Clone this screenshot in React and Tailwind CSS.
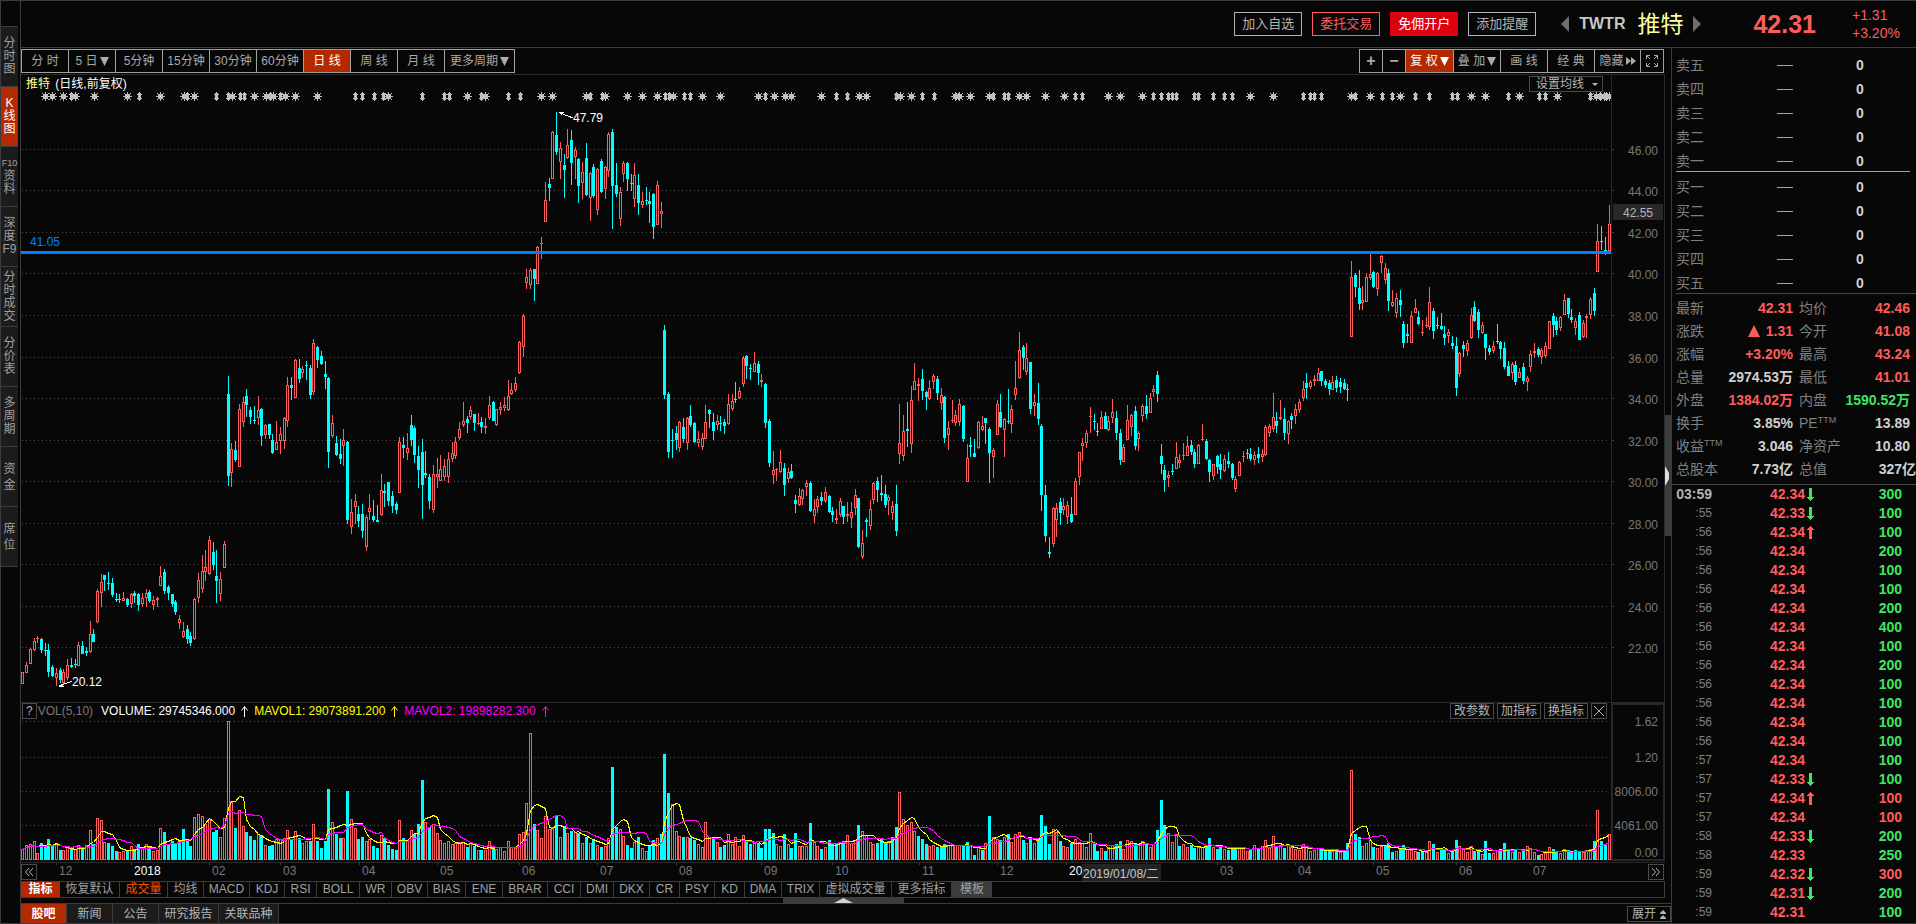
import { useState } from 'react'

const RED = '#ff5c5c'
const CYAN = '#00ffff'
const BG = '#070707'

const sideTabs = ['分时图', 'K线图', 'F10,资,料', '深,度,F9', '分时成交', '分价表', '多周期', '资金', '席位']

const periods = ['分 时', '5 日▼', '5分钟', '15分钟', '30分钟', '60分钟', '日 线', '周 线', '月 线']

const indicators = [
  ['恢复默认', 60], ['成交量', 48], ['均线', 36], ['MACD', 46], ['KDJ', 35], ['RSI', 32], ['BOLL', 43], ['WR', 32],
  ['OBV', 36], ['BIAS', 38], ['ENE', 37], ['BRAR', 45], ['CCI', 33], ['DMI', 33], ['DKX', 36], ['CR', 30],
  ['PSY', 35], ['KD', 30], ['DMA', 37], ['TRIX', 38], ['虚拟成交量', 72], ['更多指标', 60],
]

const newsTabs = ['股吧', '新闻', '公告', '研究报告', '关联品种']

const asks = ['卖五', '卖四', '卖三', '卖二', '卖一']
const bids = ['买一', '买二', '买三', '买四', '买五']

const stats = [
  ['最新', '', '42.31', 'r', '均价', '', '42.46', 'r'],
  ['涨跌', '', '1.31', 'r', '今开', '', '41.08', 'r'],
  ['涨幅', '', '+3.20%', 'r', '最高', '', '43.24', 'r'],
  ['总量', '', '2974.53万', 'w', '最低', '', '41.01', 'r'],
  ['外盘', '', '1384.02万', 'r', '内盘', '', '1590.52万', 'g'],
  ['换手', '', '3.85%', 'w', 'PE', 'TTM', '13.89', 'w'],
  ['收益', 'TTM', '3.046', 'w', '净资产', '', '10.80', 'w'],
  ['总股本', '', '7.73亿', 'w', '总值', '', '327亿', 'w'],
]

// time, price, tick direction, size, size colour
const trades = [
  ['03:59', '42.34', 'down', 300, 'g'],
  [':55', '42.33', 'down', 100, 'g'],
  [':56', '42.34', 'up', 100, 'g'],
  [':56', '42.34', '', 200, 'g'],
  [':56', '42.34', '', 100, 'g'],
  [':56', '42.34', '', 100, 'g'],
  [':56', '42.34', '', 200, 'g'],
  [':56', '42.34', '', 400, 'g'],
  [':56', '42.34', '', 100, 'g'],
  [':56', '42.34', '', 200, 'g'],
  [':56', '42.34', '', 100, 'g'],
  [':56', '42.34', '', 100, 'g'],
  [':56', '42.34', '', 100, 'g'],
  [':56', '42.34', '', 100, 'g'],
  [':57', '42.34', '', 100, 'g'],
  [':57', '42.33', 'down', 100, 'g'],
  [':57', '42.34', 'up', 100, 'r'],
  [':57', '42.34', '', 100, 'r'],
  [':58', '42.33', 'down', 200, 'g'],
  [':58', '42.33', '', 250, 'g'],
  [':59', '42.32', 'down', 300, 'r'],
  [':59', '42.31', 'down', 200, 'g'],
  [':59', '42.31', '', 100, 'g'],
]

const textColor = { r: 'text-[#ff5c5c]', g: 'text-[#3ce664]', w: 'text-[#d0d0d0]' }

// Candle history in four blocks, each with its own x scale and origin.
// Entry: direction + x, high, body top, body bottom, low, volume level
const blocks = [
  {
    k: 2.8, x0: 0, y0: 330,
    bars: `u63,1026,1026,1061,1061,477 u74,996,1005,1028,1030,466 u85,954,958,1001,1001,463 u96,923,933,960,963,454
u105,917,925,927,938,490 d116,924,927,960,969,459 d127,938,960,962,977,468 d136,941,960,1026,1041,447
d147,1005,1011,1038,1041,466 u158,1014,1029,1043,1068,462 d169,1014,1020,1050,1059,480 u178,1017,1026,1059,1062,480
u189,987,1005,1044,1050,470 d200,984,1005,1011,1014,478 d211,987,1001,1004,1014,478 u220,935,945,1007,1007,466
d231,933,948,972,972,473 d242,950,962,968,977,466 u253,873,912,966,970,421 d262,897,912,936,936,463
u273,777,783,876,879,385 u284,731,756,788,831,390 d292,735,735,750,783,457 d304,726,759,762,780,459
d315,744,759,795,801,468 d326,789,807,809,816,483 d335,792,807,809,819,486 u346,786,804,812,812,484
d357,804,807,825,831,483 u368,788,792,822,834,468 d377,783,789,799,819,478 d388,789,792,825,843,462
u399,789,804,822,831,470 u410,777,789,803,831,463 d418,781,786,813,819,470 u430,798,810,826,840,484
u441,800,804,809,831,480 u449,708,738,767,767,414 d460,717,726,783,792,426 d472,765,771,789,810,464
d483,792,792,822,831,454 d492,810,816,846,855,460 u502,855,867,878,897,451 u513,876,902,920,924,417
d525,885,897,927,942,450 d533,906,918,938,948,468 u545,804,807,926,930,381 u556,729,750,803,819,372
u567,675,723,776,789,377 u575,660,711,725,753,403 u586,618,630,731,735,388 d598,636,666,705,720,425
d606,660,738,753,819,421 u617,726,747,791,813,441 u628,633,642,713,713,385 d640,138,192,438,468,94
u648,339,357,429,471,333 d659,333,360,390,396,414 u670,222,237,410,410,361 u682,201,216,276,291,408
d690,177,198,225,261,426 d701,231,240,261,282,438 d713,228,269,273,282,451 u724,198,240,263,285,433
d732,234,237,318,348,436 u743,282,285,314,327,466 d754,282,282,315,326,468 d763,312,330,369,372,465
u774,273,336,359,360,446 u785,291,312,332,372,446 u797,261,264,332,357,444 u805,141,165,272,291,421
d816,141,165,174,210,450 u828,88,90,203,204,423 d838,87,114,147,159,444 u847,108,117,129,144,460
d858,93,105,108,150,454 d869,105,114,195,207,453 u878,27,39,186,195,403 d889,48,51,90,114,453
d900,63,78,102,105,474 d911,93,132,141,177,453 d920,141,144,366,414,297 u931,255,279,318,324,397
d942,318,339,375,378,431 d953,327,372,387,402,444 u962,297,330,347,408,444 d973,333,336,570,582,303
u984,507,546,590,612,388 u996,492,513,530,582,415 d1004,528,552,573,591,447 d1015,522,552,603,624,441
u1027,555,561,650,663,453 u1035,492,534,545,570,446 d1046,510,558,570,576,468 d1057,525,570,576,576,473
u1068,432,480,555,558,435 d1077,462,483,489,531,444 d1088,456,456,513,528,465 d1099,483,498,528,549,477
d1110,516,522,540,552,480 u1118,321,336,488,489,391 d1130,321,345,354,384,444 u1141,309,354,368,390,452
d1153,255,285,330,348,421 d1161,288,294,375,399,432 d1172,348,378,420,474,403 d1183,327,366,465,567,270
d1191,363,429,435,444,397 d1203,432,441,513,537,411 u1214,405,432,540,549,403 u1225,384,432,440,474,429
u1233,375,417,452,454,451 u1244,387,408,440,453,459 u1256,366,387,440,459,453 u1267,336,369,387,396,462
u1275,321,336,378,387,459 u1287,276,297,324,330,457 u1298,216,273,285,291,457 d1309,258,267,279,309,471
u1318,228,240,261,267,460 d1329,252,252,279,303,468 u1340,249,279,281,285,480 d1348,261,276,291,309,480
u1359,264,289,293,312,481 u1370,198,225,264,270,453 d1382,213,216,273,273,471 u1390,237,237,285,288,476
u1401,216,231,239,255,471 u1412,201,225,233,243,484 u1424,150,198,240,243,453 u1432,159,180,192,195,472
u1443,141,159,180,186,474 u1454,33,37,130,132,433`,
  },
  {
    k: 2.8, x0: 500, y0: 80,
    bars: `u66,702,708,800,831,427 u74,567,591,608,627,340 u85,564,570,614,627,130 d96,567,567,597,663,403
u105,498,501,611,612,421 u116,471,489,492,537,444 u127,306,360,425,426,379 d138,294,312,324,363,418
u147,153,156,296,297,411 d158,96,165,216,225,374 u169,186,204,245,297,441 d180,222,255,270,354,408
u189,147,195,234,237,429 d200,150,180,249,315,424 u211,201,210,230,297,427 d220,234,237,318,369,429
u231,246,276,308,357,459 d242,189,234,345,348,441 u253,276,279,353,423,460 d262,252,261,348,354,448
u273,264,267,389,405,466 d284,237,243,336,339,471 u295,258,261,326,357,468 u304,156,162,272,291,445
d315,147,156,318,447,231 d326,249,315,342,351,411 u337,321,336,416,438,418 u346,243,249,281,306,439
d357,246,249,297,333,465 d368,282,309,312,333,473 u376,249,285,356,381,457 d388,282,315,369,405,442
u399,336,363,374,384,475 d410,321,360,363,375,483 d418,336,363,372,429,467 d430,339,342,441,477,450
u441,303,315,434,435,445 u452,366,393,401,444,432 d460,735,750,945,957,192 d472,936,942,1116,1134,309
d483,1047,1079,1082,1134,343 d494,1038,1059,1080,1110,423 u503,1023,1026,1103,1116,439 d514,1014,1041,1077,1089,441
u525,1011,1014,1088,1110,441 d533,975,1008,1035,1041,443 d545,1026,1029,1086,1089,450 u556,1053,1077,1088,1101,463
u567,1060,1074,1100,1110,470 u576,975,1026,1076,1077,397 d587,987,990,1002,1044,441 d598,999,1026,1053,1080,441
u609,1005,1023,1034,1050,457 d617,1008,1029,1032,1053,471 d628,1017,1026,1038,1062,465 u640,942,972,1032,1035,433
u651,942,963,987,993,462 d659,906,957,960,969,442 u670,921,933,954,957,468 u682,828,834,911,921,435
d690,825,828,858,897,450 d701,852,864,867,900,462 u713,816,849,875,876,459 d724,843,852,879,915,459
u732,882,901,905,921,474 d743,909,912,1029,1044,417 d754,1017,1023,1149,1161,417 u766,1113,1170,1184,1212,429
u774,1163,1167,1171,1203,462 u785,1110,1146,1175,1179,468 d797,1149,1164,1215,1248,432 u808,1164,1176,1196,1209,462
d816,1152,1173,1194,1197,474 d828,1245,1260,1272,1299,429 u838,1224,1248,1275,1278,468 u847,1227,1230,1256,1275,468
u858,1200,1209,1220,1248,468 d869,1203,1209,1293,1296,399 u880,1257,1287,1307,1329,457 u889,1248,1257,1280,1299,468
d900,1236,1251,1263,1275,477 u911,1221,1236,1262,1269,471 d922,1245,1248,1296,1299,450 d931,1281,1293,1305,1326,460
u942,1287,1314,1319,1332,463 u953,1254,1263,1304,1311,459 d962,1278,1278,1311,1332,453 u973,1266,1302,1307,1326,435
u984,1266,1296,1313,1344,459 u996,1227,1245,1284,1305,450 d1004,1254,1254,1401,1404,405 u1015,1350,1389,1430,1437,424
d1026,1314,1320,1326,1371,436 u1037,1260,1287,1337,1350,457 u1046,1206,1209,1260,1272,462 d1057,1191,1203,1230,1266,459
d1068,1185,1239,1245,1263,447 d1079,1215,1242,1275,1284,459 u1088,1245,1251,1263,1305,453 u1099,1263,1278,1298,1320,441
d1110,1215,1272,1353,1368,411 u1118,972,1089,1121,1152,307 u1130,1005,1053,1127,1143,388 d1141,966,1047,1053,1101,406
u1153,918,960,1091,1119,397 u1161,849,903,929,930,424 u1172,894,912,918,963,438 d1183,867,897,933,960,447
d1194,933,936,951,990,462 u1203,900,924,957,960,468 u1214,882,888,906,927,465 d1225,888,897,939,960,471
u1236,924,945,968,990,468 d1244,948,951,1074,1089,462 u1256,1023,1044,1064,1110,465 u1267,960,1020,1023,1029,462
u1275,990,1005,1028,1038,465 u1286,957,972,1025,1038,465 d1298,975,978,1077,1086,468 u1309,1092,1134,1205,1206,456
d1317,1071,1095,1101,1131,465 d1328,1077,1119,1131,1131,495 u1340,1023,1026,1103,1107,468 u1351,1008,1038,1050,1053,480
d1359,1014,1014,1029,1092,460 d1370,1041,1047,1119,1209,378 u1382,1104,1110,1130,1194,442 u1393,960,972,1064,1065,447
d1401,942,996,1041,1044,450 u1412,1014,1017,1049,1131,441 d1424,927,1023,1026,1032,432 u1432,975,987,1031,1059,457
u1443,843,924,944,960,433 u1454,756,810,893,897,427 d1466,795,801,834,870,450 u1474,789,834,875,885,459
d1485,846,846,987,1002,441 u1497,942,966,977,1008,460 d1508,909,969,1017,1035,447 d1516,1032,1038,1245,1293,375
d1527,1215,1245,1368,1386,408 d1538,1371,1416,1422,1434,462 u1550,1281,1284,1391,1401,418 u1558,1270,1284,1319,1371,426`,
  },
  {
    k: 2.3757, x0: 1000, y0: 300,
    bars: `d143,594,606,639,675,453 u152,594,618,629,645,468 u160,603,615,650,672,471 d169,591,642,666,669,459
u180,534,543,644,645,447 u188,455,457,530,555,457 u196,414,430,437,483,460 u205,390,399,430,444,471
u215,321,348,350,399,430 d224,342,363,366,390,462 d232,369,393,396,408,483 u241,333,351,386,387,475
d250,336,348,387,387,483 u258,348,363,390,393,470 u267,297,336,353,369,466 d277,333,354,399,420,462
d286,387,399,480,495,453 u294,432,441,485,486,478 u303,315,360,419,420,451 u312,342,345,380,408,454
d322,318,333,438,450,462 u329,393,399,416,453,466 u338,312,318,349,366,454 d348,285,318,342,357,459
u357,279,294,338,339,471 u365,255,267,276,291,463 d374,213,225,282,306,420 d383,432,468,492,522,330
d391,495,510,540,576,405 u400,513,524,534,561,430 d410,492,513,516,525,457 u419,426,471,506,507,435
u427,462,480,489,504,468 u436,429,465,467,480,463 u445,408,438,467,468,472 d455,420,435,456,465,465
d462,447,456,492,504,474 u472,432,435,491,492,471 u481,372,417,419,423,472 d491,417,423,477,480,465
d498,477,480,516,546,444 u507,492,492,527,540,471 d517,465,468,501,522,477 d523,462,492,510,537,471
u533,465,477,512,516,476 d543,456,483,492,504,480 d552,489,492,534,540,471 u559,528,537,566,576,475
u569,483,486,527,528,472 u578,453,468,471,486,475 d588,447,459,462,477,484 d595,444,462,477,483,477
u604,453,465,479,495,466 d614,441,462,474,489,474 u623,447,462,470,486,469 u631,375,381,464,468,451
u640,372,378,398,411,475 u649,279,351,386,396,439 d657,336,363,378,399,471 u666,300,351,357,360,466
d676,324,357,399,420,474 u685,360,363,401,432,462 d692,339,348,360,387,472 u702,312,327,347,372,477
u711,297,306,329,339,480 u721,243,267,293,303,463 d728,219,249,264,297,472 u737,240,246,262,267,484
u747,225,237,244,258,480 u757,204,219,242,243,475 d763,213,213,243,258,477 d773,237,243,255,264,483
d783,240,249,267,285,480 u790,228,246,269,270,483 d799,228,240,264,276,480 d809,234,246,261,279,487
d818,237,249,267,270,483 d825,252,266,270,303,459`,
  },
  {
    k: 3, x0: 1330, y0: 190,
    bars: `u64,213,261,440,441,240 d76,249,255,291,321,432 d88,240,294,342,360,441 u97,288,330,338,360,469
u109,249,261,335,336,459 u121,189,252,263,270,450 d130,243,246,291,294,471 u142,246,249,296,318,475
u154,195,198,218,249,469 u166,219,234,269,282,466 d175,237,249,333,363,459 u187,300,336,347,351,486
u199,309,324,368,384,484 d211,300,330,345,381,474 d220,393,402,459,474,465 d232,402,432,438,459,478
u244,363,378,458,459,481 u256,327,354,368,369,483 d265,363,381,402,405,486 u277,390,426,428,438,486
u289,381,405,408,414,487 u298,291,336,410,420,454 d310,354,363,423,447,462 d322,381,405,408,417,486
d334,369,408,417,420,480 d343,408,432,444,465,477 u355,417,426,437,459,489 d367,438,459,468,477,483
d379,441,468,594,618,450 u388,486,489,551,561,469 d400,453,465,477,501,477 u412,450,459,482,498,487
u424,354,375,443,447,469 d433,333,351,393,396,483 d445,357,366,420,444,480 u457,396,405,428,432,492
d466,432,432,474,510,453 d478,465,474,486,495,489 u490,453,468,482,489,489 d502,402,453,456,462,480
d511,453,456,477,507,480 d523,456,474,531,537,459 d535,513,528,558,558,478 u547,516,522,548,570,487
d556,513,525,576,585,478 u568,534,546,563,564,487 d580,519,531,573,582,477 u592,558,564,575,603,469
u601,480,492,530,546,474 u613,459,483,488,504,486 d625,471,477,495,501,495 u634,474,480,500,522,492
u646,456,468,497,504,489 u658,393,393,476,477,472 d670,369,378,405,441,477 d679,381,393,420,435,486
u691,378,381,413,423,489 u703,312,330,374,375,478 d715,324,324,372,384,480 d724,357,381,390,399,489
u736,384,393,413,435,480 d748,366,375,450,450,483 u760,390,399,440,444,486 u769,372,378,383,444,480
u781,321,327,374,387,478 d793,294,309,363,378,453 u802,102,153,245,246,361 d814,108,153,156,180,453
d826,141,180,186,195,466 u838,45,102,182,183,433`,
  },
]

const candles = blocks.flatMap(({ k, x0, y0, bars }) =>
  bars.split(/\s+/).map((s) => {
    const up = s[0] === 'u'
    const [x, hi, top, bot, lo, vol] = s.slice(1).split(',').map(Number)
    const y = (v) => Math.round(v / 3) + y0
    return { up, x: Math.floor(x0 + x / k), hi: y(hi), top: y(top), bot: y(bot), lo: y(lo), vol: Math.round((510 - vol) / 3) }
  })
)

const close = (c) => (c.up ? c.top : c.bot)

const average = (n) =>
  candles
    .map((c, i) => {
      const win = candles.slice(Math.max(0, i - n + 1), i + 1)
      const avg = win.reduce((sum, w) => sum + w.vol, 0) / win.length
      return `${c.x + 0.5},${Math.round(860 - avg) + 0.5}`
    })
    .join(' ')

// Event markers above the candles: s = star, n = narrow
const marks = `s45 s52 s63 n71 s75 s94 s127 n139 s160 s184 n187 s194 n216 n228 s232 n240 n244 s254 s266 n270 s273 n280
s285 s295 s317 n355 n362 n374 n383 s388 n422 n444 n449 s467 n481 s485 n508 n520 s541 s552 s586 n590 n602 s605 s627
s642 s657 n665 n669 s673 n684 n690 s702 s720 s758 n765 s774 s785 s791 s821 n836 n847 s859 s866 n896 s900 s911 n922
n934 s955 s959 s970 s989 n993 n1004 n1008 s1019 s1026 s1045 s1064 n1075 n1082 s1108 s1120 s1142 n1153 n1161 n1168
n1172 n1176 n1194 n1198 n1213 n1224 n1232 s1250 s1273 n1303 n1310 n1314 n1321 s1351 n1355 s1370 n1382 n1392 s1400
n1415 n1429 n1452 n1457 s1471 s1485 n1508 s1519 n1539 n1545 s1557 n1590 s1596 n1600 s1604 n1606 s1609`.split(/\s+/)

const priceGrid = [
  ['46.00', 149], ['44.00', 190], ['42.00', 232], ['40.00', 273], ['38.00', 315], ['36.00', 357], ['34.00', 398],
  ['32.00', 440], ['30.00', 481], ['28.00', 523], ['26.00', 564], ['24.00', 606], ['22.00', 647],
]

const volumeGrid = [['1.62', 721], ['1.20', 757], ['8006.00', 791], ['4061.00', 825]]

// The cursor date covers the end of 2019 and the next month
const months = [
  ['12', 56], ['2018', 131], ['02', 209], ['03', 280], ['04', 359], ['05', 437], ['06', 519], ['07', 597], ['08', 676],
  ['09', 761], ['10', 832], ['11', 919], ['12', 997], ['20', 1066], ['', 1146], ['03', 1217], ['04', 1295],
  ['05', 1373], ['06', 1456], ['07', 1530],
]

function Bar({ x, top, bot, hollow }) {
  const h = Math.max(1, bot - top)
  return (
    <>
      <rect x={x - 1} y={top} width="3" height={h} fill={hollow ? RED : CYAN} />
      {hollow && h > 2 && <rect x={x} y={top + 1} width="1" height={h - 2} fill={BG} />}
    </>
  )
}

function GridLines({ rows }) {
  return rows.map(([label, y]) => (
    <line key={label} x1="22" x2="1608" y1={y + 0.5} y2={y + 0.5} stroke="#505050" strokeDasharray="1 3" />
  ))
}

function PriceChart() {
  return (
    <svg className="block h-[627px] w-full" viewBox="21 75 1590 627" preserveAspectRatio="none" shapeRendering="crispEdges">
      <GridLines rows={priceGrid} />
      {marks.map((m) => {
        const x = Number(m.slice(1))
        return m[0] === 's' ? (
          <path key={m} d={`M${x - 2} 94h5v5h-5zM${x} 92h1v9h-1zM${x - 4} 96h9v1h-9zM${x - 3} 93h1v1h-1zM${x + 3} 93h1v1h-1zM${x - 3} 99h1v1h-1zM${x + 3} 99h1v1h-1z`} fill="#c0c0c0" />
        ) : (
          <path key={m} d={`M${x} 92h1v9h-1zM${x - 1} 93h3v7h-3zM${x - 2} 94h5v1h-5zM${x - 2} 98h5v1h-5z`} fill="#c0c0c0" />
        )
      })}
      {candles.map((c) => (
        <g key={c.x}>
          <rect x={c.x} y={c.hi} width="1" height={Math.max(1, c.lo - c.hi)} fill={c.up ? RED : CYAN} />
          <Bar x={c.x} top={c.top} bot={c.bot} hollow={c.up} />
        </g>
      ))}
      <rect x="21" y="251" width="1590" height="3" fill="#0080ff" />
      <g stroke="#fff" fill="#fff">
        <path d="M559 112.500L573 118" fill="none" />
        <path d="M558 112h6l-3 3z" stroke="none" />
        <path d="M59 685.500L72 681.500" fill="none" />
        <path d="M58 687h6l-2 -4z" stroke="none" />
      </g>
      <g fill="#fff" fontFamily="Liberation Sans, sans-serif" fontSize="12">
        <text x="573" y="122">47.79</text>
        <text x="72" y="686">20.12</text>
        <text x="30" y="246" fill="#0080ff">41.05</text>
      </g>
    </svg>
  )
}

function VolumeChart() {
  return (
    <svg className="block h-[159px] w-full" viewBox="21 703 1590 159" preserveAspectRatio="none" shapeRendering="crispEdges">
      <GridLines rows={volumeGrid} />
      {candles.map((c, i) => (
        <Bar key={c.x} x={c.x} top={860 - c.vol} bot={860} hollow={i === 0 || close(c) <= close(candles[i - 1])} />
      ))}
      <polyline points={average(5)} fill="none" stroke="#ffff00" />
      <polyline points={average(10)} fill="none" stroke="#ff00ff" />
    </svg>
  )
}

function SmallButton({ children }) {
  return (
    <button className="flex h-4 items-center justify-center border border-[#4a4a4a] px-[3px] text-xs leading-none text-[#b4b4b4]">
      {children}
    </button>
  )
}

function UpArrow({ className }) {
  return (
    <svg className={className} width="7" height="11" viewBox="0 0 7 11" fill="none" stroke="currentColor">
      <path d="M3.500 11V1M0.500 4.500L3.500 0.500L6.500 4.500" />
    </svg>
  )
}

function Caret() {
  return <svg className="ml-0.5 inline" width="9" height="9" viewBox="0 0 9 9" fill="currentColor"><path d="M0 0H9L4.500 9z" /></svg>
}

function Tick({ dir }) {
  if (!dir) return null
  return (
    <svg width="7" height="13" viewBox="0 0 7 13" fill={dir === 'up' ? RED : '#3ce664'} shapeRendering="crispEdges">
      <path d={dir === 'up' ? 'M3 0H4L7 4H5V13H2V4H0z' : 'M3 13H4L7 9H5V0H2V9H0z'} />
    </svg>
  )
}

function Header() {
  return (
    <header className="flex h-12 items-center justify-end border-y border-[#3c3c3c]">
      <div className="flex gap-2.5 text-[13px]">
        <button className="h-6 w-[68px] border border-[#b4b4b4] text-[#b4b4b4]">加入自选</button>
        <button className="h-6 w-[68px] border border-[#ff5c5c] text-[#ff5c5c]">委托交易</button>
        <button className="h-6 w-[68px] bg-[#dc0011] text-white">免佣开户</button>
        <button className="h-6 w-[68px] border border-[#b4b4b4] text-[#b4b4b4]">添加提醒</button>
      </div>
      <button className="ml-[25px]" aria-label="上一只">
        <svg width="8" height="16" viewBox="0 0 8 16" fill="#6e6e6e"><path d="M8 0V16L0 8z" /></svg>
      </button>
      <span className="ml-2.5 text-base font-bold text-[#c8c8c8]">TWTR</span>
      <span className="ml-3 text-[23px] leading-none text-[#ffffa0]">推特</span>
      <button className="ml-2.5" aria-label="下一只">
        <svg width="8" height="16" viewBox="0 0 8 16" fill="#6e6e6e"><path d="M0 0V16L8 8z" /></svg>
      </button>
      <strong className="ml-[52px] text-[25px] leading-none text-[#ff5c5c]">42.31</strong>
      <div className="ml-9 w-16 text-sm leading-[18px] text-[#ff5c5c]">
        <div>+1.31</div>
        <div>+3.20%</div>
      </div>
    </header>
  )
}

function Toolbar({ period, setPeriod }) {
  const tool = 'h-full border-r border-[#a0a0a0]'
  return (
    <div className="mt-px flex h-6 justify-between pr-px text-xs text-[#aaaaaa]">
      <div className="flex border border-r-0 border-[#a0a0a0]">
        {periods.map((p) => (
          <button
            key={p}
            onClick={() => setPeriod(p)}
            className={`h-full w-[47px] border-r border-[#a0a0a0] whitespace-pre ${p === period ? 'bg-[#b42a00] text-white' : ''}`}
          >
            {p.replace('▼', '')}
            {p.endsWith('▼') && <Caret />}
          </button>
        ))}
        <button className="h-full w-[70px] border-r border-[#a0a0a0]">更多周期<Caret /></button>
      </div>
      <div className="flex border border-r-0 border-[#a0a0a0]">
        <button className={`${tool} w-[23px] text-base leading-none font-bold`}>+</button>
        <button className={`${tool} w-[23px] text-base leading-none font-bold`}>−</button>
        <button className={`${tool} w-12 bg-[#b42a00] text-white`}>复 权<Caret /></button>
        <button className={`${tool} w-[47px]`}>叠 加<Caret /></button>
        <button className={`${tool} w-[47px]`}>画 线</button>
        <button className={`${tool} w-[47px]`}>经 典</button>
        <button className={`${tool} flex w-[46px] items-center justify-center`}>
          隐藏
          <svg className="ml-0.5" width="10" height="8" viewBox="0 0 10 8" fill="currentColor"><path d="M0 0L5 4L0 8zM5 0L10 4L5 8z" /></svg>
        </button>
        <button className={`${tool} flex w-[23px] items-center justify-center`} aria-label="全屏">
          <svg width="12" height="12" viewBox="0 0 12 12" fill="none" stroke="currentColor">
            <path d="M0.500 4V0.500H4M8 0.500H11.500V4M11.500 8V11.500H8M4 11.500H0.500V8M1 1L4 4M11 1L8 4M11 11L8 8M1 11L4 8" />
          </svg>
        </button>
      </div>
    </div>
  )
}

function BookRows({ rows }) {
  return rows.map((name) => (
    <tr key={name} className="h-6">
      <th scope="row" className="w-[101px] text-left font-normal text-[#808080]">{name}</th>
      <td><div className="h-px w-4 bg-[#3ce664]" aria-label="—" /></td>
      <td className="w-[60px] text-left font-bold text-[#d0d0d0]">0</td>
    </tr>
  ))
}

function QuotePanel() {
  return (
    <aside className="w-[245px] shrink-0 overflow-hidden border-l border-[#3c3c3c] text-sm leading-none">
      <div className="pt-[5px] pl-1">
        <table className="w-full"><tbody><BookRows rows={asks} /></tbody></table>
        <div className="-mt-0.5 mr-1.5 h-px bg-[#a0a0a0]" />
        <table className="mt-[3px] w-full"><tbody><BookRows rows={bids} /></tbody></table>
      </div>
      <div className="-mt-0.5 ml-1 border-t border-[#464646] pt-0.5">
        <table className="w-full table-fixed">
          <tbody>
            {stats.map(([a, aSup, av, ac, b, bSup, bv, bc]) => (
              <tr key={a} className="h-[23px] whitespace-nowrap">
                <th scope="row" className="w-[52px] text-left font-normal text-[#808080]">
                  <span className="flex">{a}{aSup && <sup className="top-0 text-[9px] leading-none">{aSup}</sup>}</span>
                </th>
                <td className={`w-[65px] text-right font-bold ${textColor[ac]}`}>
                  <div className="flex items-center justify-end gap-1.5">
                    {a === '涨跌' && <svg width="12" height="12" viewBox="0 0 12 12" fill={RED}><path d="M6 0L12 12H0z" /></svg>}
                    {av}
                  </div>
                </td>
                <th scope="row" className="w-[56px] pl-1.5 text-left font-normal text-[#808080]">
                  <span className="flex">{b}{bSup && <sup className="top-0 text-[9px] leading-none">{bSup}</sup>}</span>
                </th>
                <td className={`text-right font-bold ${b === '总值' ? 'pr-0' : 'pr-1.5'} ${textColor[bc]}`}>
                  <div className="flex justify-end">{bv}</div>
                </td>
              </tr>
            ))}
          </tbody>
        </table>
      </div>
      <table className="mt-1 w-full border-t border-[#464646]">
        <tbody>
          {trades.map(([time, price, dir, size, color], i) => (
            <tr key={i} className="h-[19px]">
              <td className={`w-10 text-right ${i === 0 ? 'font-bold text-[#b4b4b4]' : 'text-xs leading-none text-[#808080]'}`}>{time}</td>
              <td className="w-[93px] text-right font-bold text-[#ff5c5c]">{price}</td>
              <td className="pl-0.5"><Tick dir={dir} /></td>
              <td className={`pr-3.5 text-right font-bold ${textColor[color]}`}>{size}</td>
            </tr>
          ))}
        </tbody>
      </table>
    </aside>
  )
}

export default function App() {
  const [period, setPeriod] = useState('日 线')
  const [side, setSide] = useState('K线图')
  const [news, setNews] = useState('股吧')

  return (
    <div className="flex min-h-screen border-b border-[#3c3c3c] bg-[#070707] font-['Liberation_Sans','Noto_Sans_CJK_SC',sans-serif]">
      {/* Left view switcher */}
      <nav className="flex w-[21px] shrink-0 flex-col border-t border-r border-l border-[#3c3c3c] pt-[25px] pr-px">
        {sideTabs.map((tab) => {
          const lines = tab.includes(',') ? tab.split(',') : [...tab]
          return (
            <button
              key={tab}
              onClick={() => setSide(tab)}
              className={`flex h-[60px] w-[17px] flex-col items-center justify-center border-t border-[#3c3c3c] text-xs ${
                lines.length === 2 ? 'leading-4' : 'leading-[13px]'
              } ${tab === side ? 'bg-[#b42a00] text-white' : 'bg-[#1c1c1c] text-[#a0a0a0]'}`}
            >
              {lines.map((ch, i) => (
                <span key={i} className={ch === 'F10' ? 'text-[9px] leading-[13px]' : ''}>{ch}</span>
              ))}
            </button>
          )
        })}
        <div className="w-[17px] border-t border-[#3c3c3c]" />
      </nav>

      <div className="flex min-w-0 flex-1 flex-col">
        <Header />
        <div className="flex flex-1">
          <div className="flex min-w-0 flex-1 flex-col">
            <div className="flex flex-1">
              <main className="flex min-w-0 flex-1 flex-col">
                <Toolbar period={period} setPeriod={setPeriod} />

                {/* Price */}
                <div className="mt-px flex border-t border-[#282828]">
                  <div className="relative min-w-0 flex-1">
                    <PriceChart />
                    <div className="absolute top-0 right-0 left-0 flex items-start justify-between pr-2 pl-[5px] text-xs">
                      <h1 className="pt-px text-[#ffff9a]">推特 <span className="ml-0.5 text-white">(日线,前复权)</span></h1>
                      <button className="mt-px flex h-4 items-center border border-[#4a4a4a] pr-1 pl-1.5 text-xs leading-none text-[#b4b4b4]">
                        设置均线
                        <svg className="ml-2" width="6" height="3" viewBox="0 0 6 3" fill="currentColor"><path d="M0 0H6L3 3z" /></svg>
                      </button>
                    </div>
                  </div>
                  <svg className="h-[627px] w-[54px] shrink-0 border-r border-l border-[#282828]" viewBox="1612 75 52 627">
                    <g fontFamily="Liberation Sans, sans-serif" fontSize="12" fill="#787878" textAnchor="end">
                      {priceGrid.map(([label, y]) => (
                        <g key={label}>
                          <rect x="1612" y={y} width="2" height="1" fill="#3c3c3c" />
                          <text x="1658" y={y + 6}>{label}</text>
                        </g>
                      ))}
                      <rect x="1613" y="204" width="50" height="16" fill="#282828" />
                      <text x="1653" y="217" fill="#b4b4b4">42.55</text>
                    </g>
                  </svg>
                </div>

                {/* Volume */}
                <div className="flex border-t border-[#282828]">
                  <div className="relative min-w-0 flex-1">
                    <VolumeChart />
                    <div className="absolute top-0 right-0 left-0 flex items-center justify-between pr-1 pl-px text-xs whitespace-nowrap">
                      <div className="flex items-center">
                        <SmallButton>?</SmallButton>
                        <span className="ml-px text-[#787878]">VOL(5,10)</span>
                        <span className="ml-2 text-white">VOLUME: 29745346.000</span>
                        <UpArrow className="ml-1.5 text-white" />
                        <span className="ml-1.5 text-[#ffff00]">MAVOL1: 29073891.200</span>
                        <UpArrow className="ml-1.5 text-[#ffff00]" />
                        <span className="ml-1.5 text-[#ff00ff]">MAVOL2: 19898282.300</span>
                        <UpArrow className="ml-1.5 text-[#ff00ff]" />
                      </div>
                      <div className="flex gap-[3px]">
                        <SmallButton>改参数</SmallButton>
                        <SmallButton>加指标</SmallButton>
                        <SmallButton>换指标</SmallButton>
                        <button className="flex size-4 items-center justify-center border border-[#4a4a4a] text-[#b4b4b4]" aria-label="关闭">
                          <svg width="10" height="10" viewBox="0 0 10 10" stroke="currentColor"><path d="M0 0L10 10M10 0L0 10" /></svg>
                        </button>
                      </div>
                    </div>
                  </div>
                  <svg className="h-[158px] w-[54px] shrink-0 border-2 border-[#282828]" viewBox="1613 705 50 154">
                    <g fontFamily="Liberation Sans, sans-serif" fontSize="12" fill="#787878" textAnchor="end">
                      {volumeGrid.map(([label, y]) => (
                        <text key={label} x="1658" y={y + 5}>{label}</text>
                      ))}
                      <text x="1658" y="857">0.00</text>
                    </g>
                  </svg>
                </div>

                {/* Dates */}
                <div className="flex h-[19px] items-start border-t border-[#282828] text-xs">
                  <button className="mt-px flex size-4 shrink-0 items-center justify-center border border-[#4a4a4a]" aria-label="向前">
                    <svg width="8" height="8" viewBox="0 0 8 8" fill="none" stroke="#b4b4b4"><path d="M4 0L0.500 4L4 8M8 0L4.500 4L8 8" /></svg>
                  </button>
                  <svg className="h-[18px] min-w-0 flex-1" viewBox="37 863 1611 18" preserveAspectRatio="none">
                    <g fontFamily="Liberation Sans, Noto Sans CJK SC, sans-serif" fontSize="12">
                      {months.map(([label, x]) => (
                        <g key={x}>
                          <rect x={x} y="863" width="1" height="2" fill="#3c3c3c" />
                          <text x={x + 3} y="875" fill={label.startsWith('20') ? '#fff' : '#787878'}>{label}</text>
                        </g>
                      ))}
                      <rect x="1082" y="864" width="79" height="17" fill="#232323" />
                      <text x="1083" y="878" fill="#c8c8c8">2019/01/08/二</text>
                    </g>
                  </svg>
                  <button className="mt-px mr-px flex size-4 shrink-0 items-center justify-center border border-[#4a4a4a]" aria-label="向后">
                    <svg width="8" height="8" viewBox="0 0 8 8" fill="none" stroke="#b4b4b4"><path d="M0 0L3.500 4L0 8M4 0L7.500 4L4 8" /></svg>
                  </button>
                </div>

                {/* Indicators */}
                <div className="flex h-[17px] border border-l-0 border-[#3c3c3c] text-xs leading-[15px] whitespace-nowrap text-[#a0a0a0]">
                  <button className="w-[39px] bg-[#b42a00] leading-[15px] font-bold text-white">指标</button>
                  {indicators.map(([name, width]) => (
                    <button
                      key={name}
                      style={{ width }}
                      className={`border-r border-[#3c3c3c] leading-[15px] ${name === '成交量' ? 'text-[#ff5000]' : ''}`}
                    >
                      {name}
                    </button>
                  ))}
                  <button className="w-10 bg-[#3c3c3c] leading-[15px]">模板</button>
                </div>
                <div className="flex h-[5px] justify-center">
                  <div className="flex w-[121px] justify-center bg-[#3c3c3c]">
                    <svg width="19" height="5" viewBox="0 0 19 5" fill="#d0d0d0"><path d="M0 5L9.500 0L19 5z" /></svg>
                  </div>
                </div>
              </main>

              {/* Panel splitter */}
              <div className="flex w-1.5 shrink-0 flex-col pt-[367px]">
                <div className="flex h-[121px] items-center bg-[#3c3c3c]">
                  <svg width="5" height="20" viewBox="0 0 5 20" fill="#e0e0e0"><path d="M0 0L4 7V13L0 20z" /></svg>
                </div>
              </div>
            </div>

            {/* News tabs */}
            <div className="flex h-5 justify-between border-t border-[#3c3c3c] text-xs text-[#b4b4b4]">
              <div className="flex">
                {newsTabs.map((tab) => (
                  <button
                    key={tab}
                    onClick={() => setNews(tab)}
                    className={`h-full border-r border-[#3c3c3c] leading-none ${tab.length > 2 ? 'w-[60px]' : 'w-[46px]'} ${
                      tab === news ? 'bg-[#b42a00] font-bold text-white' : 'bg-[#1c1c1c]'
                    }`}
                  >
                    {tab}
                  </button>
                ))}
              </div>
              <button className="mt-0.5 flex h-4 items-center gap-1 border border-[#4a4a4a] px-1 leading-none">
                展开
                <svg width="6" height="9" viewBox="0 0 6 9" fill="currentColor"><path d="M3 0L6 3H0zM3 5L6 8H0zM0 3h6v1H0zM0 8h6v1H0z" /></svg>
              </button>
            </div>
          </div>
          <QuotePanel />
        </div>
      </div>
    </div>
  )
}
